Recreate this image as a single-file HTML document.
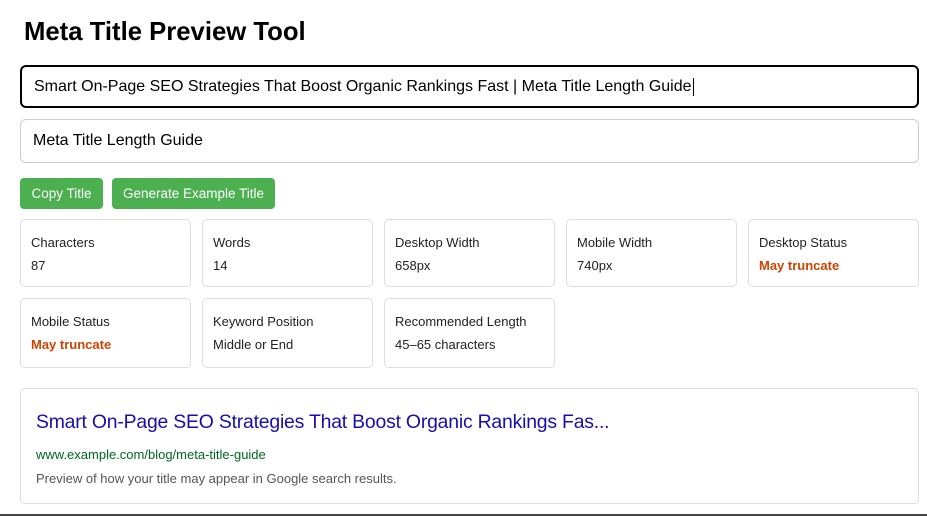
<!DOCTYPE html>
<html><head><style>
html,body{margin:0;padding:0;background:#fff;width:927px;height:516px;overflow:hidden;font-family:"Liberation Sans",Arial,sans-serif;}
body{position:relative;}
h1{position:absolute;left:24px;top:18px;margin:0;font-size:25.7px;font-weight:bold;color:#000;}
.in{position:absolute;left:20px;width:899px;box-sizing:border-box;border-radius:6px;font-size:16px;color:#000;padding-left:12px;display:flex;align-items:center;}
.in1{top:65px;height:43px;border:2px solid #000;}
.in2{top:119px;height:44px;border:1px solid #ccc;}
.btn{position:absolute;top:178px;height:31px;background:#4caf50;color:#fff;border-radius:4px;font-size:13.5px;display:flex;align-items:center;justify-content:center;}
.card{position:absolute;width:171px;height:68px;box-sizing:border-box;border:1px solid #ddd;border-radius:5px;padding:11px 10px;font-size:13px;color:#222;line-height:23px;}
.warn{color:#cc4400;font-weight:bold;}
.prev{position:absolute;left:20px;top:388px;width:899px;height:116px;box-sizing:border-box;border:1px solid #ddd;border-radius:5px;}
.pt{position:absolute;left:15px;top:22px;font-size:19.4px;color:#1a0dab;letter-spacing:-0.2px;}
.pu{position:absolute;left:15px;top:58px;font-size:13px;color:#006621;}
.pd{position:absolute;left:15px;top:82px;font-size:13px;color:#555;}
.bar{position:absolute;left:0;top:514px;width:927px;height:2px;background:#444;}
</style></head><body>
<h1>Meta Title Preview Tool</h1>
<div class="in in1">Smart On-Page SEO Strategies That Boost Organic Rankings Fast | Meta Title Length Guide<span style="border-left:1px solid #000;height:18px;margin-left:1px"></span></div>
<div class="in in2">Meta Title Length Guide</div>
<div class="btn" style="left:20px;width:83px">Copy Title</div>
<div class="btn" style="left:112px;width:163px">Generate Example Title</div>
<div class="card" style="left:20px;top:219px">Characters<br>87</div>
<div class="card" style="left:202px;top:219px">Words<br>14</div>
<div class="card" style="left:384px;top:219px">Desktop Width<br>658px</div>
<div class="card" style="left:566px;top:219px">Mobile Width<br>740px</div>
<div class="card" style="left:748px;top:219px">Desktop Status<br><span class="warn">May truncate</span></div>
<div class="card" style="left:20px;top:298px;height:70px">Mobile Status<br><span class="warn">May truncate</span></div>
<div class="card" style="left:202px;top:298px;height:70px">Keyword Position<br>Middle or End</div>
<div class="card" style="left:384px;top:298px;height:70px">Recommended Length<br>45–65 characters</div>
<div class="prev">
<div class="pt">Smart On-Page SEO Strategies That Boost Organic Rankings Fas...</div>
<div class="pu">www.example.com/blog/meta-title-guide</div>
<div class="pd">Preview of how your title may appear in Google search results.</div>
</div>
<div class="bar"></div>
</body></html>
